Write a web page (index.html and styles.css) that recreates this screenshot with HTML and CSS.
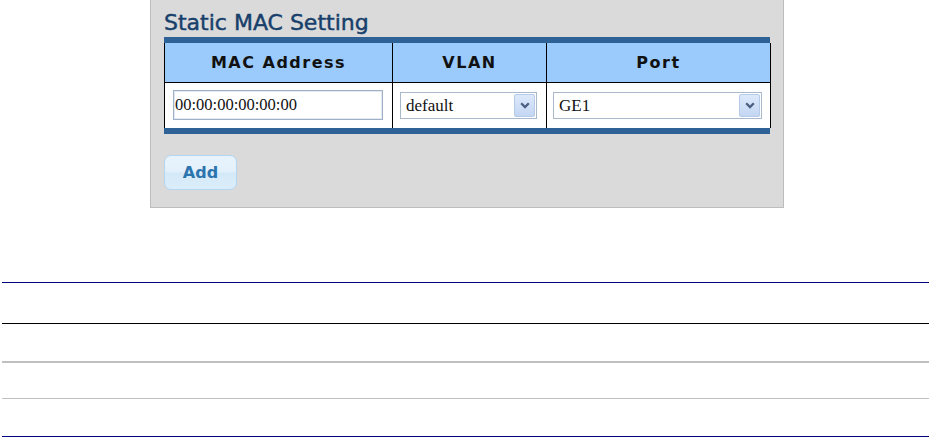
FILE: index.html
```html
<!DOCTYPE html>
<html lang="en">
<head>
<meta charset="utf-8">
<title>Static MAC Setting</title>
<link rel="stylesheet" href="styles.css">
</head>
<body>
<div class="panel">
  <div class="title">Static MAC Setting</div>
  <div class="tbl-wrap">
    <table class="grid">
      <colgroup><col class="w-mac"><col class="w-vlan"><col class="w-port"></colgroup>
      <tr class="head">
        <th>MAC Address</th>
        <th>VLAN</th>
        <th>Port</th>
      </tr>
      <tr class="row">
        <td class="cell-mac"><input class="mac" type="text" value="00:00:00:00:00:00"></td>
        <td class="cell-vlan">
          <div class="select sel-vlan"><span class="sel-text">default</span><span class="arrow"><svg width="10" height="7" viewBox="0 0 10 7"><path d="M1.2 1.2 L5 5 L8.8 1.2" fill="none" stroke="#4b5f82" stroke-width="2.3"/></svg></span></div>
        </td>
        <td class="cell-port">
          <div class="select sel-port"><span class="sel-text">GE1</span><span class="arrow"><svg width="10" height="7" viewBox="0 0 10 7"><path d="M1.2 1.2 L5 5 L8.8 1.2" fill="none" stroke="#4b5f82" stroke-width="2.3"/></svg></span></div>
        </td>
      </tr>
    </table>
  </div>
  <div class="actions"><button class="btn" type="button">Add</button></div>
</div>
<div class="list">
  <div class="line l1"></div>
  <div class="line l2"></div>
  <div class="line l3"></div>
  <div class="line l4"></div>
  <div class="line l5"></div>
</div>
</body>
</html>
```
FILE: styles.css
```css
html, body {
  margin: 0;
  padding: 0;
  background: #ffffff;
}
body {
  width: 929px;
  height: 437px;
  overflow: hidden;
  font-family: "DejaVu Sans", Verdana, sans-serif;
}
.panel {
  box-sizing: border-box;
  width: 634px;
  margin-left: 150px;
  background: #dadada;
  border: 1px solid #bdbdbd;
  border-top: none;
  padding: 0 13px 17px 13px;
}
.title {
  font-size: 22px;
  line-height: 26px;
  padding-top: 10px;
  margin-bottom: 1px;
  color: #173f6b;
  -webkit-text-stroke: 0.45px #173f6b;
  white-space: nowrap;
}
.tbl-wrap {
  width: 606px;
  border-top: 6px solid #2e6195;
  border-bottom: 6px solid #2e6195;
}
.grid {
  width: 100%;
  border-collapse: collapse;
  table-layout: fixed;
}
.w-mac { width: 228px; }
.w-vlan { width: 154px; }
.w-port { width: 224px; }
.grid th, .grid td {
  border-left: 1px solid #000;
  border-right: 1px solid #000;
  padding: 0;
}
.head th {
  height: 39px;
  background: #9acbfc;
  border-bottom: 1px solid #000;
  font-size: 16px;
  font-weight: bold;
  letter-spacing: 1.5px;
  color: #111;
  text-align: center;
  vertical-align: middle;
}
.row td {
  height: 45px;
  background: #ffffff;
  vertical-align: top;
  box-sizing: border-box;
}
.cell-mac { padding: 7px 0 0 8px !important; }
.cell-vlan { padding: 9px 0 0 7px !important; }
.cell-port { padding: 9px 0 0 6px !important; }
.mac {
  box-sizing: border-box;
  display: block;
  width: 210px;
  height: 30px;
  margin: 0;
  border: 1px solid #9fb1c7;
  box-shadow: inset 0 0 0 1px #e3e9f1;
  padding: 0 0 0 1px;
  font-family: "Liberation Serif", "Times New Roman", serif;
  font-size: 16.5px;
  color: #111;
  background: #fff;
  outline: none;
}
.select {
  box-sizing: border-box;
  display: flex;
  align-items: center;
  height: 27px;
  border: 1px solid #a9b8cb;
  background: #fff;
  padding: 1px;
}
.sel-vlan { width: 137px; }
.sel-port { width: 209px; }
.sel-text {
  flex: 1;
  padding-left: 4px;
  font-family: "Liberation Serif", "Times New Roman", serif;
  font-size: 17px;
  color: #111;
  line-height: 23px;
}
.arrow {
  box-sizing: border-box;
  width: 21px;
  height: 23px;
  border: 1px solid #b5cbe8;
  border-radius: 2px;
  background: linear-gradient(#dde9fb, #c3d6f3);
  display: flex;
  align-items: center;
  justify-content: center;
}
.arrow svg { display: block; }
.actions {
  padding-top: 21px;
}
.btn {
  box-sizing: border-box;
  display: block;
  width: 73px;
  height: 35px;
  margin: 0;
  padding: 0;
  border: 1px solid #b3d6f0;
  border-radius: 7px;
  background: linear-gradient(#e8f3fc 0%, #e3f0fb 48%, #d4e9f8 52%, #dbedfa 100%);
  color: #2c74ae;
  font-family: "DejaVu Sans", Verdana, sans-serif;
  font-size: 16px;
  font-weight: bold;
}
.list {
  margin: 74px 0 0 2px;
}
.line { width: 927px; }
.l1 { border-top: 1px solid #000080; height: 40px; }
.l2 { border-top: 1px solid #000000; height: 37px; }
.l3 { border-top: 2px solid #c0c0c0; height: 35px; }
.l4 { border-top: 1px solid #c0c0c0; height: 37px; }
.l5 { border-top: 1px solid #000080; }
```
